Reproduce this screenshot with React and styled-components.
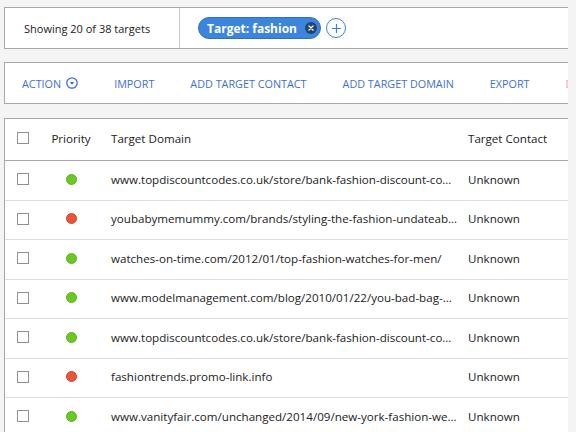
import React from 'react';
import styled, { createGlobalStyle } from 'styled-components';

const GlobalStyle = createGlobalStyle`
  html, body {
    margin: 0;
    padding: 0;
    background: #f4f4f4;
    font-family: "Open Sans", "Noto Sans", sans-serif;
    color: #222;
  }
  * { box-sizing: border-box; }
`;

const Page = styled.div`
  width: 576px;
  height: 432px;
  overflow: hidden;
  padding: 7px 8px 0 4px;
  display: flex;
  flex-direction: column;
`;

const Panel = styled.div`
  background: #fff;
  border: 1px solid #a8a8a8;
  border-right: none;
  width: 564px;
  height: 42px;
  margin-bottom: ${p => p.$gap || 13}px;
  display: flex;
  align-items: center;
  flex-shrink: 0;
  overflow: hidden;
`;

const Count = styled.div`
  width: 175px;
  height: 100%;
  padding-left: 19px;
  display: flex;
  align-items: center;
  font-size: 11px;
  color: #222;
  border-right: 1px solid #c8c8c8;
`;

const Filters = styled.div`
  display: flex;
  align-items: center;
  gap: 5px;
  padding-left: 18px;
`;

const Chip = styled.div`
  height: 22px;
  border-radius: 11px;
  background: #3b86dc;
  border: 1px solid #2f6fc0;
  color: #fff;
  font-weight: 700;
  font-size: 12px;
  display: flex;
  align-items: center;
  gap: 8px;
  padding: 0 3px 0 8px;
`;

const ChipClose = styled.span`
  width: 12px;
  height: 12px;
  border-radius: 50%;
  background: #22446e;
  display: flex;
  align-items: center;
  justify-content: center;
`;

const AddButton = styled.span`
  width: 20px;
  height: 20px;
  border-radius: 50%;
  border: 1.5px solid #3b7fd8;
  background: #fff;
  display: flex;
  align-items: center;
  justify-content: center;
`;

const Toolbar = styled.div`
  display: flex;
  align-items: center;
  gap: 36px;
  padding-left: 17px;
  white-space: nowrap;
`;

const ToolButton = styled.span`
  display: flex;
  align-items: center;
  gap: 5px;
  font-size: 10.8px;
  color: ${p => p.$faded ? '#f2a6c4' : '#3e6fd4'};
`;

const Table = styled.div`
  background: #fff;
  border: 1px solid #a8a8a8;
  border-right: none;
  border-bottom: none;
  width: 564px;
  flex-shrink: 0;
`;

const Row = styled.div`
  display: grid;
  grid-template-columns: 35px 62px 362px 1fr;
  align-items: center;
  height: ${p => p.$head ? 42 : 39.5}px;
  padding-bottom: ${p => p.$head ? 3 : 2}px;
  border-bottom: 1px solid ${p => p.$head ? '#a8a8a8' : '#dedede'};
  font-size: 11.6px;
`;

const CheckCell = styled.div`
  padding-left: 12px;
  display: flex;
`;

const Checkbox = styled.span`
  width: 12px;
  height: 12px;
  border: 1.5px solid #909090;
  background: #fff;
`;

const PriorityCell = styled.div`
  display: flex;
  justify-content: center;
`;

const Dot = styled.span`
  width: 11px;
  height: 11px;
  border-radius: 50%;
  background: ${p => p.$level === 'high' ? '#e8553a' : '#6cc723'};
  border: 1px solid ${p => p.$level === 'high' ? '#d0462e' : '#5cb219'};
`;

const Cell = styled.div`
  padding-left: ${p => p.$pad ?? 9}px;
  padding-right: 6px;
  white-space: nowrap;
  overflow: hidden;
  text-overflow: ellipsis;
`;

const rows = [
  ['low', 'www.topdiscountcodes.co.uk/store/bank-fashion-discount-codes/'],
  ['high', 'youbabymemummy.com/brands/styling-the-fashion-undateable-woman/'],
  ['low', 'watches-on-time.com/2012/01/top-fashion-watches-for-men/'],
  ['low', 'www.modelmanagement.com/blog/2010/01/22/you-bad-bag-girl/'],
  ['low', 'www.topdiscountcodes.co.uk/store/bank-fashion-discount-codes/'],
  ['high', 'fashiontrends.promo-link.info'],
  ['low', 'www.vanityfair.com/unchanged/2014/09/new-york-fashion-week/'],
];

export default function App() {
  return (
    <>
      <GlobalStyle />
      <Page>
        <Panel>
          <Count>Showing 20 of 38 targets</Count>
          <Filters>
            <Chip>
              Target: fashion
              <ChipClose>
                <svg width="6" height="6" viewBox="0 0 6 6">
                  <path d="M1 1L5 5M5 1L1 5" stroke="#fff" strokeWidth="1.4" strokeLinecap="round" />
                </svg>
              </ChipClose>
            </Chip>
            <AddButton>
              <svg width="11" height="11" viewBox="0 0 11 11">
                <path d="M5.5 1V10M1 5.5H10" stroke="#3b7fd8" strokeWidth="1.2" />
              </svg>
            </AddButton>
          </Filters>
        </Panel>
        <Panel $gap={14}>
          <Toolbar>
            <ToolButton>
              ACTION
              <svg width="12" height="12" viewBox="0 0 12 12">
                <circle cx="6" cy="6" r="5.2" fill="none" stroke="#3e6fd4" strokeWidth="1.3" />
                <path d="M3.8 5H8.2L6 7.8Z" fill="#3e6fd4" />
              </svg>
            </ToolButton>
            <ToolButton>IMPORT</ToolButton>
            <ToolButton>ADD TARGET CONTACT</ToolButton>
            <ToolButton>ADD TARGET DOMAIN</ToolButton>
            <ToolButton>EXPORT</ToolButton>
            <ToolButton $faded>DELETE</ToolButton>
          </Toolbar>
        </Panel>
        <Table>
          <Row $head>
            <CheckCell><Checkbox /></CheckCell>
            <PriorityCell>Priority</PriorityCell>
            <Cell>Target Domain</Cell>
            <Cell $pad={4}>Target Contact</Cell>
          </Row>
          {rows.map(([level, domain], i) => (
            <Row key={i}>
              <CheckCell><Checkbox /></CheckCell>
              <PriorityCell><Dot $level={level} /></PriorityCell>
              <Cell>{domain}</Cell>
              <Cell $pad={4}>Unknown</Cell>
            </Row>
          ))}
        </Table>
      </Page>
    </>
  );
}
